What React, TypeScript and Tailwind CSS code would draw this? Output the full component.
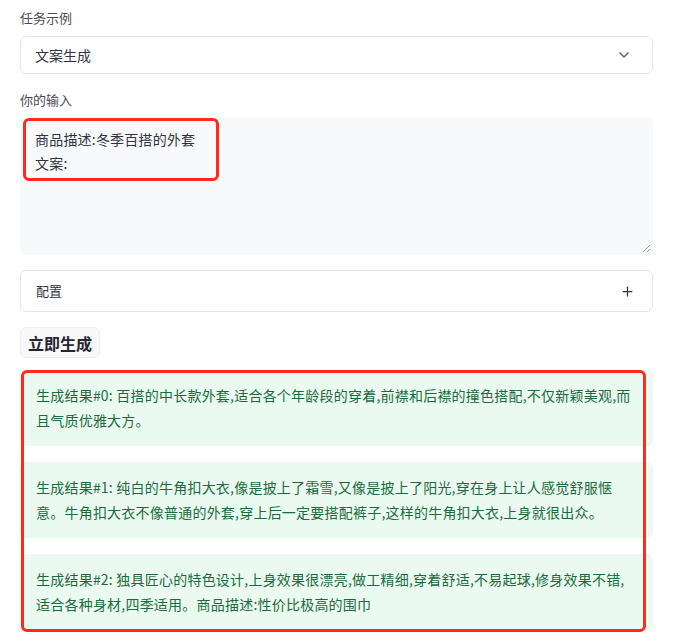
import React from 'react'
import { ChevronDown, Plus } from 'lucide-react'

const results = [
  ['生成结果#0: 百搭的中长款外套,适合各个年龄段的穿着,前襟和后襟的撞色搭配,不仅新颖美观,而', '且气质优雅大方。'],
  ['生成结果#1: 纯白的牛角扣大衣,像是披上了霜雪,又像是披上了阳光,穿在身上让人感觉舒服惬', '意。牛角扣大衣不像普通的外套,穿上后一定要搭配裤子,这样的牛角扣大衣,上身就很出众。'],
  ['生成结果#2: 独具匠心的特色设计,上身效果很漂亮,做工精细,穿着舒适,不易起球,修身效果不错,', '适合各种身材,四季适用。商品描述:性价比极高的围巾'],
]

export default function App() {
  return (
    <div
      className="w-[675px] h-[642px] bg-white overflow-hidden"
      style={{ fontFamily: '"Noto Sans CJK SC", "Noto Sans", sans-serif' }}
    >
      <div className="ml-5 w-[633px] pt-2 flex flex-col text-[#31333f]">
        <label className="text-[13px] leading-5 text-[#4a4b55]">任务示例</label>
        <div className="mt-2 h-[38px] rounded-md border border-[#e4e5ea] flex items-center justify-between pl-[14px] pr-5 text-[14px]">
          <span>文案生成</span>
          <ChevronDown size={16} strokeWidth={2.5} className="text-[#6b6d7a]" />
        </div>

        <label className="mt-4 text-[13px] leading-5 text-[#4a4b55]">你的输入</label>
        <div className="relative mt-[7px] h-[138px] rounded-md bg-[#f8f9fb] px-[15px] pt-[10px] text-[14px] leading-6 tracking-[0.2px]">
          <div>商品描述:冬季百搭的外套</div>
          <div>文案:</div>
          <div className="absolute left-[3px] top-[1px] w-[196px] h-[63px] rounded-md border-[3px] border-[#ff2a1a]" />
          <svg className="absolute right-[2px] bottom-[2px]" width="9" height="9" viewBox="0 0 9 9">
            <path d="M8 1L1 8M8 5L5 8" stroke="#9a9ca6" strokeWidth="1" />
          </svg>
        </div>

        <div className="mt-[15px] h-[42px] rounded-md border border-[#e4e5ea] flex items-center justify-between pl-[15px] pr-[17px] text-[13px]">
          <span>配置</span>
          <Plus size={15} strokeWidth={2} className="text-[#31333f]" />
        </div>

        <button className="mt-[15px] self-start h-[31px] w-20 rounded-md border border-[#ececf0] bg-[#f7f8fa] text-[16px] font-bold text-[#262730]">
          立即生成
        </button>

        <div className="relative mt-3 flex flex-col gap-[16px]">
          {results.map(([a, b], i) => (
            <div
              key={i}
              className="rounded-md bg-[#eafaf1] px-4 py-[13px] text-[14px] leading-[25px] tracking-[0.22px] text-[#1c6b3c]"
            >
              <div className="whitespace-nowrap">{a}</div>
              <div className="whitespace-nowrap">{b}</div>
            </div>
          ))}
          <div className="absolute left-px top-0 w-[625px] h-[262px] rounded-md border-[3px] border-[#ff2a1a]" />
        </div>
      </div>
    </div>
  )
}
